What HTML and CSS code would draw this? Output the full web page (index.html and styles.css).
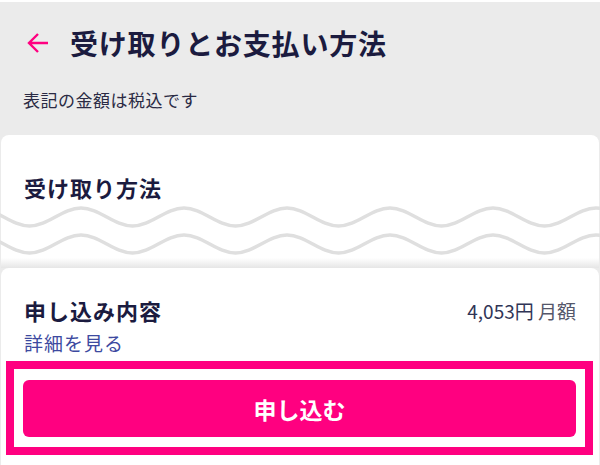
FILE: index.html
```html
<!DOCTYPE html>
<html lang="ja">
<head>
    <meta charset="UTF-8">
    <meta name="viewport" content="width=device-width, initial-scale=1.0">
    <title>受け取りとお支払い方法</title>
    <link rel="stylesheet" href="styles.css">
</head>
<body>
    <div class="header">
        <div class="title-row">
            <svg class="back" width="22" height="22" viewBox="0 0 22 22">
                <path d="M21 11H2M11 2L2 11l9 9" fill="none" stroke="#ff0080" stroke-width="2.4"/>
            </svg>
            <h1>受け取りとお支払い方法</h1>
        </div>
        <p class="note">表記の金額は税込です</p>
    </div>

    <div class="main">
        <div class="card card-receive">
            <h2>受け取り方法</h2>
            <svg class="waves" width="600" height="54" viewBox="0 0 600 54">
                <path d="M-22 4c18.5 0 33 18 51.5 18s33-18 51.5-18s33 18 51.5 18s33-18 51.5-18s33 18 51.5 18s33-18 51.5-18s33 18 51.5 18s33-18 51.5-18s33 18 51.5 18s33-18 51.5-18s33 18 51.5 18s33-18 51.5-18s33 18 51.5 18" fill="none" stroke="#dfdfdf" stroke-width="3.5"/>
                <path d="M-22 31c18.5 0 33 18 51.5 18s33-18 51.5-18s33 18 51.5 18s33-18 51.5-18s33 18 51.5 18s33-18 51.5-18s33 18 51.5 18s33-18 51.5-18s33 18 51.5 18s33-18 51.5-18s33 18 51.5 18s33-18 51.5-18s33 18 51.5 18" fill="none" stroke="#dfdfdf" stroke-width="3.5"/>
            </svg>
            <div class="fade"></div>
        </div>

        <div class="card card-order">
            <div class="order-row">
                <h2>申し込み内容</h2>
                <span class="price">4,053円 <span class="unit">月額</span></span>
            </div>
            <a class="detail" href="#">詳細を見る</a>
            <div class="apply-box">
                <button class="apply">申し込む</button>
            </div>
        </div>
    </div>
</body>
</html>
```

FILE: styles.css
```css
body {
    margin: 0;
    background-color: #ffffff;
    font-family: "Noto Sans CJK JP", "Noto Sans", sans-serif;
    color: #1b1b3f;
}
.header {
    margin-top: 2px;
    height: 133px;
    box-sizing: border-box;
    padding: 24px 0 0 23px;
    background-color: #ebebeb;
}
.title-row {
    display: flex;
    align-items: center;
    gap: 21px;
    height: 34px;
}
.back {
    margin-left: 4px;
}
h1 {
    margin: 0;
    font-size: 28px;
    line-height: 34px;
    font-weight: bold;
    letter-spacing: 0.8px;
}
.note {
    margin: 28px 0 0;
    font-size: 17px;
    line-height: 24px;
    letter-spacing: 0.5px;
    color: #2a2a44;
}
.main {
    background-color: #ebebeb;
}
.card {
    background-color: #ffffff;
    border-radius: 8px 8px 0 0;
    margin: 0 1px;
}
h2 {
    margin: 0;
    font-size: 22px;
    line-height: 30px;
    font-weight: bold;
    letter-spacing: 1px;
}
.card-receive {
    padding-top: 37px;
}
.card-receive h2 {
    padding-left: 23px;
}
.waves {
    display: block;
    margin: 2px 0 0 -1px;
}
.fade {
    height: 10px;
    background: linear-gradient(#ffffff, #e6e6e6);
}
.card-order {
    padding: 27px 23px 10px;
}
.order-row {
    display: flex;
    justify-content: space-between;
    align-items: center;
}
.price {
    font-size: 19px;
    color: #2f3456;
}
.unit {
    color: #55576a;
}
.detail {
    display: block;
    margin-top: 5px;
    font-size: 19px;
    line-height: 26px;
    letter-spacing: 1px;
    color: #3d4aa0;
    text-decoration: none;
}
.apply-box {
    margin: 5px -17px 0 -18px;
    border: 8px solid #ff0080;
    padding: 11px 9px 10px;
    background-color: #ffffff;
}
.apply {
    display: block;
    width: 100%;
    height: 57px;
    border: none;
    border-radius: 6px;
    background-color: #ff0080;
    color: #ffffff;
    font-family: inherit;
    font-size: 23px;
    font-weight: bold;
    cursor: pointer;
}
```
